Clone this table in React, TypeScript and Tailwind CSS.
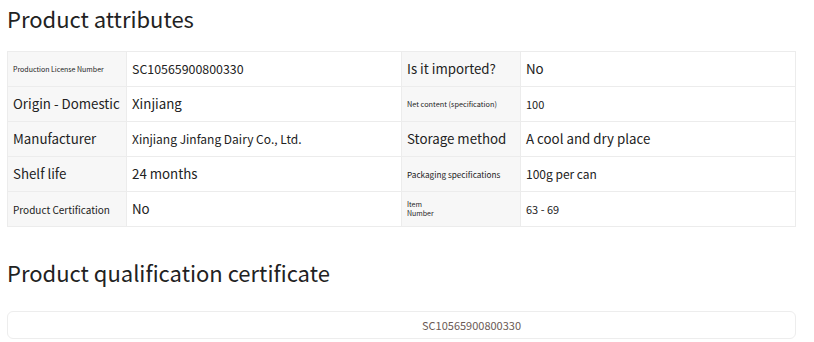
type Attr = {
  label: string;
  value: string;
  labelCls: string;
  valueCls: string;
};

const rows: [Attr, Attr][] = [
  [
    { label: "Production License Number", value: "SC10565900800330", labelCls: "text-[7px]", valueCls: "text-[12.4px]" },
    { label: "Is it imported?", value: "No", labelCls: "text-[13.3px]", valueCls: "text-[13.3px]" },
  ],
  [
    { label: "Origin - Domestic", value: "Xinjiang", labelCls: "text-[13.3px]", valueCls: "text-[13.3px]" },
    { label: "Net content (specification)", value: "100", labelCls: "text-[7.3px]", valueCls: "text-[11px]" },
  ],
  [
    { label: "Manufacturer", value: "Xinjiang Jinfang Dairy Co., Ltd.", labelCls: "text-[13.3px]", valueCls: "text-[12px]" },
    { label: "Storage method", value: "A cool and dry place", labelCls: "text-[13.3px]", valueCls: "text-[13.3px]" },
  ],
  [
    { label: "Shelf life", value: "24 months", labelCls: "text-[13.3px]", valueCls: "text-[13.3px]" },
    { label: "Packaging specifications", value: "100g per can", labelCls: "text-[8.2px]", valueCls: "text-[12px]" },
  ],
  [
    { label: "Product Certification", value: "No", labelCls: "text-[10px]", valueCls: "text-[13.3px]" },
    { label: "Item\nNumber", value: "63 - 69", labelCls: "text-[7px] whitespace-pre-line leading-[9px]", valueCls: "text-[11px]" },
  ],
];

function Cell({ text, cls, label }: { text: string; cls: string; label?: boolean }) {
  return (
    <div
      className={
        "flex h-[35px] items-center border-b border-r border-[#ececec] px-[5px] text-[#222] " +
        (label ? "bg-[#f7f7f7] " : "bg-white ") +
        cls
      }
    >
      {text}
    </div>
  );
}

export default function App() {
  return (
    <div
      className="h-[342px] w-[814px] overflow-hidden bg-white px-[7px] pr-[18px]"
      style={{ fontFamily: '"Noto Sans CJK SC", "Noto Sans", sans-serif' }}
    >
      <h2 className="pt-[2px] text-[22px] leading-[32px] text-[#222]">Product attributes</h2>

      <div className="mt-[17px] grid grid-cols-[119px_275px_119px_1fr] border-l border-t border-[#ececec]">
        {rows.map(([a, b], i) => (
          <div key={i} className="contents">
            <Cell text={a.label} cls={a.labelCls} label />
            <Cell text={a.value} cls={a.valueCls} />
            <Cell text={b.label} cls={b.labelCls} label />
            <Cell text={b.value} cls={b.valueCls} />
          </div>
        ))}
      </div>

      <h2 className="mt-[29px] text-[22px] leading-[32px] text-[#222]">Product qualification certificate</h2>

      <div className="mt-[23px] flex h-[28px] items-center rounded-[6px] border border-[#ededed] bg-white pl-[414px] text-[11px] text-[#6b5a55]">
        SC10565900800330
      </div>
    </div>
  );
}
